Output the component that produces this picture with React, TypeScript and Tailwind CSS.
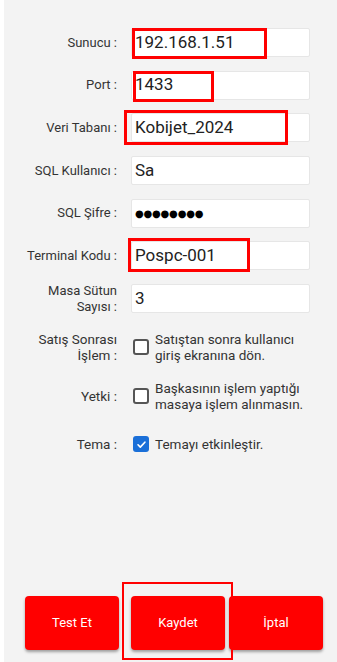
import React from "react";

const Mark = ({ cls }: { cls: string }) => (
  <span className={"pointer-events-none absolute border-[3px] border-[#ff0000] " + cls} />
);

const Field = ({ label, value, mark, dots }: any) => (
  <div className="flex items-center h-[29px]">
    <label className="w-[113px] shrink-0 text-right text-[13px] leading-[16px] text-[#333]">{label}</label>
    <div className="relative ml-[14px] flex-1 h-full bg-white border border-[#e6e6e6] rounded-[2px] flex items-center pl-[3px]">
      {dots ? (
        <span className="text-[10px] tracking-[-0.2px] text-black" style={{ fontFamily: "'DejaVu Sans', sans-serif" }}>
          ●●●●●●●●
        </span>
      ) : (
        <span className="text-[17px] text-[#222]">{value}</span>
      )}
      {mark && <Mark cls={mark} />}
    </div>
  </div>
);

const Check = ({ label, text, checked, className }: any) => (
  <div className={"flex items-center " + className}>
    <label className="w-[113px] shrink-0 text-right text-[13.5px] leading-[16px] text-[#333]">{label}</label>
    <span
      className={
        "ml-[16px] w-[16px] h-[16px] shrink-0 rounded-[3px] flex items-center justify-center " +
        (checked ? "bg-[#1a6fd8]" : "border-2 border-[#555] bg-white")
      }
    >
      {checked && (
        <svg width="11" height="11" viewBox="0 0 12 12">
          <path d="M2.2 6.3l2.5 2.5 5-5.3" stroke="white" strokeWidth="1.8" fill="none" strokeLinecap="round" strokeLinejoin="round" />
        </svg>
      )}
    </span>
    <span className="ml-[6px] text-[13.5px] leading-[16px] text-[#333]">{text}</span>
  </div>
);

export default function App() {
  return (
    <div className="flex h-[662px] w-[337px] overflow-hidden" style={{ fontFamily: "Roboto, 'Liberation Sans', sans-serif" }}>
      <div className="w-[4px] bg-white" />
      <div className="flex-1 bg-[#f3f3f3] flex flex-col">
        <div className="pt-[28px] pr-[27px] flex flex-col gap-[13.7px]">
          <Field label="Sunucu :" value="192.168.1.51" mark="-top-[1px] left-[0px] w-[135px] h-[31px]" />
          <Field label="Port :" value="1433" mark="-top-[1px] left-[1px] w-[81px] h-[31px]" />
          <Field label="Veri Tabanı :" value="Kobijet_2024" mark="-top-[4px] -left-[8px] w-[164px] h-[35px]" />
          <Field label="SQL Kullanıcı :" value="Sa" />
          <Field label="SQL Şifre :" dots />
          <Field label="Terminal Kodu :" value="Pospc-001" mark="-top-[4px] -left-[4px] w-[122px] h-[34px]" />
          <Field
            label={
              <>
                Masa Sütun
                <br />
                Sayısı :
              </>
            }
            value="3"
          />
        </div>
        <Check
          className="mt-[18px] h-[32px]"
          label={
            <>
              Satış Sonrası
              <br />
              İşlem :
            </>
          }
          text={
            <>
              Satıştan sonra kullanıcı
              <br />
              giriş ekranına dön.
            </>
          }
        />
        <Check
          className="mt-[17px] h-[32px]"
          label="Yetki :"
          text={
            <>
              Başkasının işlem yaptığı
              <br />
              masaya işlem alınmasın.
            </>
          }
        />
        <Check className="mt-[16px] h-[32px]" label="Tema :" text="Temayı etkinleştir." checked />
        <div className="mt-auto mb-[12px] flex pl-[21px]">
          <button className="w-[94px] h-[54px] bg-[#ff0000] rounded-[4px] shadow-[0_2px_3px_rgba(0,0,0,0.35)] text-white text-[13px]">
            Test Et
          </button>
          <div className="relative ml-[12px]">
            <button className="w-[94px] h-[54px] bg-[#ff0000] rounded-[4px] shadow-[0_2px_3px_rgba(0,0,0,0.35)] text-white text-[13px]">
              Kaydet
            </button>
            <span className="pointer-events-none absolute -top-[14px] -left-[9px] w-[111px] h-[78px] border-2 border-[#ff0000]" />
          </div>
          <button className="ml-[4px] w-[94px] h-[54px] bg-[#ff0000] rounded-[4px] shadow-[0_2px_3px_rgba(0,0,0,0.35)] text-white text-[13px]">
            İptal
          </button>
        </div>
      </div>
    </div>
  );
}
